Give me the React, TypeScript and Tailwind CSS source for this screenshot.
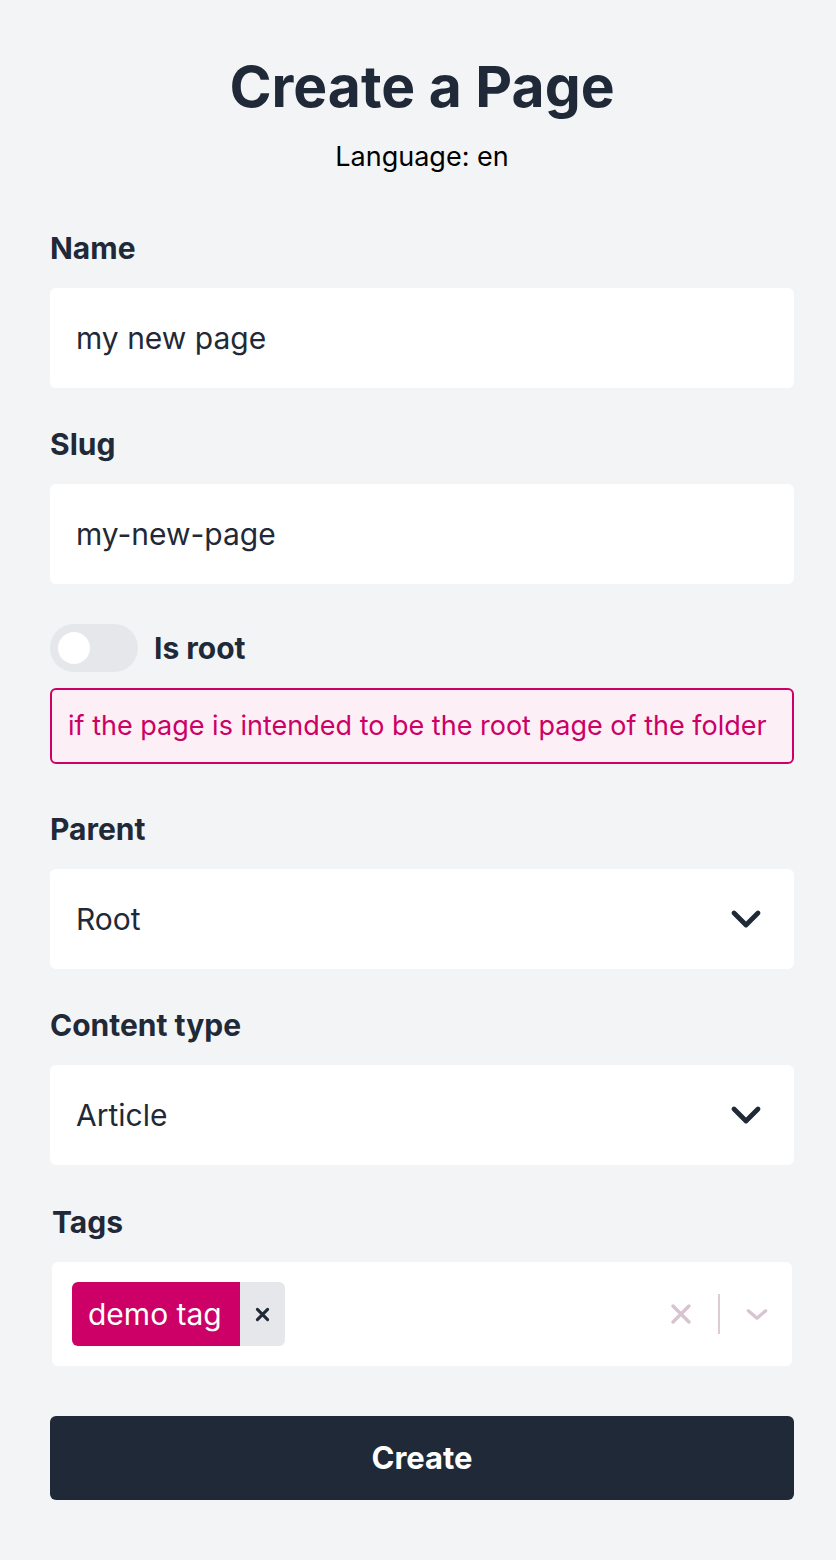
import { useState } from "react";

const font = { fontFamily: "Inter, 'Noto Sans', sans-serif" };

const Chevron = ({ className }: { className?: string }) => (
  <svg viewBox="0 0 24 24" fill="none" className={className}>
    <path
      d="M4 8l8 8 8-8"
      stroke="currentColor"
      strokeWidth="3.2"
      strokeLinecap="round"
      strokeLinejoin="round"
    />
  </svg>
);

const Field = ({
  label,
  children,
}: {
  label: string;
  children: React.ReactNode;
}) => (
  <div className="flex flex-col">
    <label className="text-[30px] leading-[40px] font-bold text-[#1f2937] mb-[20px] pt-[2px] -mt-[2px]">
      {label}
    </label>
    {children}
  </div>
);

const App = () => {
  const [isRoot, setIsRoot] = useState(false);

  return (
    <div
      className="min-h-[1560px] bg-[#f3f4f6] pl-[50px] pr-[42px] pt-[57px]"
      style={font}
    >
      {/* header */}
      <h1 className="text-center text-[57px] leading-[60px] font-bold text-[#1f2937]">
        Create a Page
      </h1>
      <p className="text-center text-[27px] leading-[32px] text-black mt-[24px]">
        Language: en
      </p>

      <div className="mt-[55px] flex flex-col">
        <Field label="Name">
          <input
            className="h-[100px] rounded-md bg-white px-[26px] text-[30px] text-[#1f2937] outline-none"
            defaultValue="my new page"
          />
        </Field>

        <div className="mt-[36px]">
          <Field label="Slug">
            <input
              className="h-[100px] rounded-md bg-white px-[26px] text-[30px] text-[#1f2937] outline-none"
              defaultValue="my-new-page"
            />
          </Field>
        </div>

        {/* is root */}
        <div className="mt-[40px] flex items-center gap-[16px]">
          <button
            onClick={() => setIsRoot(!isRoot)}
            className="w-[88px] h-[48px] rounded-full bg-[#e5e7eb] flex items-center px-[8px]"
          >
            <span className="w-[32px] h-[32px] rounded-full bg-white" />
          </button>
          <span className="text-[30px] font-bold text-[#1f2937]">Is root</span>
        </div>
        <div className="mt-[16px] h-[76px] flex items-center rounded-md border-2 border-[#cc0066] bg-[#fcf0f6] px-[16px] text-[27px] text-[#cc0066]">
          if the page is intended to be the root page of the folder
        </div>

        <div className="mt-[45px]">
          <Field label="Parent">
            <div className="h-[100px] rounded-md bg-white pl-[26px] pr-[30px] flex items-center justify-between text-[30px] text-[#1f2937]">
              <span>Root</span>
              <Chevron className="w-[36px] h-[36px] text-[#1f2937]" />
            </div>
          </Field>
        </div>

        <div className="mt-[36px]">
          <Field label="Content type">
            <div className="h-[100px] rounded-md bg-white pl-[26px] pr-[30px] flex items-center justify-between text-[30px] text-[#1f2937]">
              <span>Article</span>
              <Chevron className="w-[36px] h-[36px] text-[#1f2937]" />
            </div>
          </Field>
        </div>

        {/* tags */}
        <div className="mt-[37px] px-[2px]">
          <Field label="Tags">
            <div className="h-[104px] rounded-md bg-white pl-[20px] pr-[22px] flex items-center">
              <div className="flex h-[64px] rounded-md overflow-hidden">
                <span className="bg-[#cc0066] text-white text-[30px] pl-[16px] pr-[18px] flex items-center">
                  demo tag
                </span>
                <span className="bg-[#e5e7eb] w-[45px] flex items-center justify-center text-[#1f2937]">
                  <svg viewBox="0 0 20 20" className="w-[17px] h-[17px]">
                    <path
                      d="M4 4l12 12M16 4L4 16"
                      stroke="currentColor"
                      strokeWidth="3.6"
                      strokeLinecap="round"
                    />
                  </svg>
                </span>
              </div>
              <div className="ml-auto flex items-center">
                <svg viewBox="0 0 20 20" className="w-[20px] h-[20px] text-[#d8c4d0]">
                  <path
                    d="M2 2l16 16M18 2L2 18"
                    stroke="currentColor"
                    strokeWidth="3.4"
                    strokeLinecap="round"
                  />
                </svg>
                <span className="ml-[27px] mr-[24px] w-[2px] h-[40px] bg-[#ddccd6]" />
                <svg viewBox="0 0 24 24" className="w-[26px] h-[26px] text-[#d8c4d0]" fill="none">
                  <path
                    d="M4 9l8 7 8-7"
                    stroke="currentColor"
                    strokeWidth="3"
                    strokeLinecap="round"
                    strokeLinejoin="round"
                  />
                </svg>
              </div>
            </div>
          </Field>
        </div>

        <button className="mt-[50px] h-[84px] rounded-md bg-[#1f2937] text-white text-[31px] font-bold">
          Create
        </button>
      </div>
    </div>
  );
};

export default App;
